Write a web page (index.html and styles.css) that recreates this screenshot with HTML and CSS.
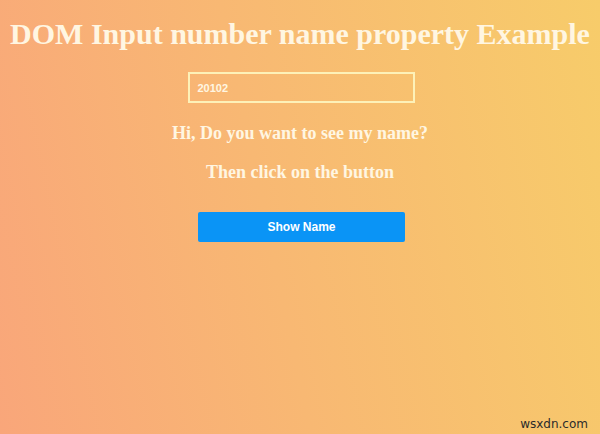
FILE: index.html
```html
<!DOCTYPE html>
<html>
<head>
<meta charset="utf-8">
<link rel="stylesheet" href="styles.css">
</head>
<body>
<div class="page">
  <h1 class="title">DOM Input number name property Example</h1>
  <div class="field"><span class="value">20102</span></div>
  <p class="line">Hi, Do you want to see my name?</p>
  <p class="line">Then click on the button</p>
  <button class="btn">Show Name</button>
  <div class="mark">wsxdn.com</div>
</div>
</body>
</html>
```
FILE: styles.css
```css
html, body {
  margin: 0;
  padding: 0;
  height: 100%;
}
body {
  width: 600px;
  height: 434px;
  overflow: hidden;
  background: linear-gradient(78deg, #f9a67a 0%, #f8b873 45%, #f7cc6a 100%);
  font-family: "Liberation Serif", "Times New Roman", serif;
}
.page {
  position: relative;
  height: 434px;
  display: flex;
  flex-direction: column;
  align-items: center;
}
.title {
  margin: 16px 0 0;
  font-size: 30px;
  line-height: 35px;
  font-weight: bold;
  color: #fff6e2;
  white-space: nowrap;
}
.field {
  margin-top: 21px;
  margin-left: 2px;
  width: 223px;
  height: 27px;
  border: 2px solid #fdf1b8;
  display: flex;
  align-items: center;
  box-sizing: content-box;
}
.value {
  margin-left: 8px;
  font-family: "Liberation Sans", Arial, sans-serif;
  font-weight: bold;
  font-size: 11px;
  color: #fff6e2;
}
.line {
  margin: 0;
  font-size: 18px;
  line-height: 21px;
  font-weight: bold;
  color: #fff6e2;
}
.line:first-of-type {
  margin-top: 20px;
}
.line + .line {
  margin-top: 18px;
}
.btn {
  margin-top: 29px;
  width: 207px;
  height: 30px;
  border: none;
  border-radius: 2px;
  background: #0a94f6;
  color: #ffffff;
  font-family: "Liberation Sans", Arial, sans-serif;
  font-weight: bold;
  font-size: 12px;
  padding: 0;
  margin-left: 3px;
}
.mark {
  position: absolute;
  right: 12px;
  bottom: 3px;
  font-family: "DejaVu Sans", "Liberation Sans", sans-serif;
  font-size: 12px;
  color: #2b2b2b;
}
```
